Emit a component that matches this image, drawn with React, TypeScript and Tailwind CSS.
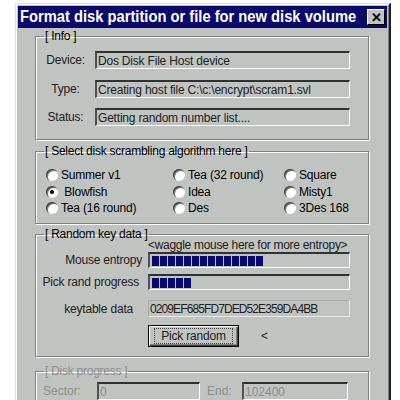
import React from "react";

const FONT = { fontFamily: '"Liberation Sans", Arial, sans-serif' };

const sunken =
  "border-t-2 border-l-2 border-t-[#303030] border-l-[#505050] border-b border-r border-b-white border-r-white";

const Radio: React.FC<{ label: string; checked?: boolean }> = ({ label, checked }) => (
  <div className="flex items-center h-[16.5px]">
    <span className="relative w-[12px] h-[12px] rounded-full bg-white shadow-[inset_1px_1px_0_#404040,inset_2px_2px_0_#808080] shrink-0">
      {checked && (
        <span className="absolute left-[4px] top-[4px] w-[4px] h-[4px] rounded-full bg-black" />
      )}
    </span>
    <span className="ml-[3px] text-[12px] tracking-[-0.2px] leading-none text-black whitespace-nowrap">{label}</span>
  </div>
);

const Group: React.FC<{ title: string; disabled?: boolean; className?: string; children: React.ReactNode }> = ({
  title,
  disabled,
  className,
  children,
}) => (
  <fieldset
    className={`mx-[17px] w-[334px] border border-[#808080] shadow-[1px_1px_0_#fff,inset_1px_1px_0_#fff] ${className ?? ""}`}
  >
    <legend
      className={`ml-[8px] px-[1px] text-[12px] tracking-[-0.25px] leading-[14px] whitespace-nowrap ${disabled ? "text-[#8a8e8a]" : "text-black"}`}
    >
      [ {title} ]
    </legend>
    {children}
  </fieldset>
);

const InfoRow: React.FC<{ label: string; value: string; className?: string }> = ({ label, value, className }) => (
  <div className={`flex items-center ${className ?? ""}`}>
    <span className="w-[59px] text-center text-[12px] tracking-[-0.2px] text-[#202020]">{label}</span>
    <div
      className={`w-[255px] h-[18px] flex items-center pl-[1px] text-[12px] tracking-[-0.2px] text-[#202020] whitespace-nowrap ${sunken}`}
    >
      {value}
    </div>
  </div>
);

const Bar: React.FC<{ blocks: number }> = ({ blocks }) => (
  <div className={`w-[202px] h-[16px] flex items-center gap-[1px] pl-[2px] ${sunken}`}>
    {Array.from({ length: blocks }).map((_, i) => (
      <span key={i} className="w-[7px] h-[10px] bg-[#0a0a6e]" />
    ))}
  </div>
);

export default function App() {
  return (
    <div className="w-[400px] h-[400px] bg-white overflow-hidden" style={FONT}>
      <div className="ml-[15px] mt-[3px] w-[376px] h-[420px] bg-[#c0c4c0] border-t border-l border-t-[#e0e0e0] border-l-[#e0e0e0] border-r-2 border-r-[#202020] border-b-2 border-b-[#202020] shadow-[inset_1px_1px_0_#fff,inset_-1px_0_0_#808080] p-[2px]">
        {/* Title bar */}
        <div className="h-[22px] bg-[#0a0a6a] flex items-center pl-[2px] pr-[2px]">
          <div className="flex-1 min-w-0">
            <span className="inline-block origin-left scale-x-[0.92] text-white font-bold text-[16px] leading-none whitespace-nowrap">
              Format disk partition or file for new disk volume
            </span>
          </div>
          <span className="w-[18px] h-[16px] shrink-0 bg-[#c0c4c0] border-t border-l border-white border-r border-b border-r-black border-b-black flex items-center justify-center text-black font-bold text-[13px] leading-none">
            ✕
          </span>
        </div>

        <div className="flex flex-col">
          {/* Info */}
          <Group title="Info" className="mt-[1px] h-[111px]">
            <InfoRow label="Device:" value="Dos Disk File Host device" className="mt-[8px]" />
            <InfoRow label="Type:" value="Creating host file C:\c:\encrypt\scram1.svl" className="mt-[11px]" />
            <InfoRow label="Status:" value="Getting random number list...." className="mt-[10px]" />
          </Group>

          {/* Algorithm */}
          <Group title="Select disk scrambling algorithm here" className="mt-[4px] h-[80px]">
            <div className="grid grid-cols-[127px_111px_1fr] pl-[10px] pt-[9px]">
              <Radio label="Summer v1" />
              <Radio label="Tea (32 round)" />
              <Radio label="Square" />
              <Radio label={"\u00a0Blowfish"} checked />
              <Radio label="Idea" />
              <Radio label="Misty1" />
              <Radio label="Tea (16 round)" />
              <Radio label="Des" />
              <Radio label="3Des 168" />
            </div>
          </Group>

          {/* Random key data */}
          <Group title="Random key data" className="mt-[3px] h-[130px]">
            <div className="grid grid-cols-[112px_1fr] text-[12px] leading-[14px] tracking-[-0.2px] text-[#202020] whitespace-nowrap">
              <span />
              <span className="tracking-[-0.3px] -mt-[3px]">&lt;waggle mouse here for more entropy&gt;</span>

              <span className="text-right pr-[6px] self-center">Mouse entropy</span>
              <Bar blocks={14} />

              <span className="text-right pr-[9px] self-center mt-[6px]">Pick rand progress</span>
              <div className="mt-[6px]">
                <Bar blocks={5} />
              </div>

              <span className="text-right pr-[15px] self-center mt-[10px]">keytable data</span>
              <div className="mt-[10px] w-[202px] h-[17px] flex items-center pl-[1px] tracking-[-0.9px] border border-[#a8aca8] border-b-[#e8e8e8] border-r-[#e8e8e8]">
                0209EF685FD7DED52E359DA4BB
              </div>

              <span />
              <div className="mt-[8px] flex items-center">
                <button className="w-[91px] h-[22px] bg-[#c0c4c0] border border-black shadow-[inset_1px_1px_0_#fff,inset_-1px_-1px_0_#404040,inset_-2px_-2px_0_#808080] flex items-center justify-center">
                  <span className="border border-dotted border-[#404040] px-[6px] leading-[14px] text-[12px]">
                    Pick random
                  </span>
                </button>
                <span className="ml-[22px]">&lt;</span>
              </div>
            </div>
          </Group>

          {/* Disk progress */}
          <Group title="Disk progress" disabled className="mt-[7px] h-[60px]">
            <div className="flex items-center text-[12px] text-[#8a8e8a] mt-[4px] pl-[7px]">
              <span className="w-[54px]">Sector:</span>
              <div className={`w-[103px] h-[18px] pl-[1px] flex items-center ${sunken}`}>0</div>
              <span className="ml-[7px] w-[35px]">End:</span>
              <div className={`w-[106px] h-[18px] pl-[1px] flex items-center ${sunken}`}>102400</div>
            </div>
          </Group>
        </div>
      </div>
    </div>
  );
}
